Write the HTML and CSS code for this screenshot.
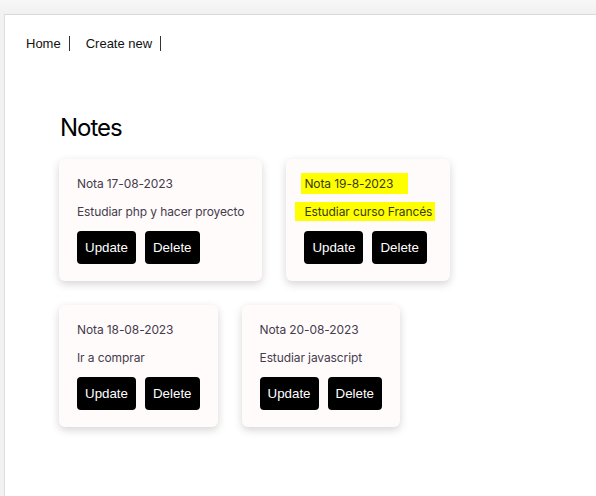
FILE: index.html
```html
<!DOCTYPE html>
<html lang="es">
<head>
<meta charset="utf-8">
<title>Notes</title>
<link rel="stylesheet" href="styles.css">
</head>
<body>
<div class="chrome">
  <div class="window">
    <nav class="nav">
      <a class="nav-link" href="#">Home</a>
      <a class="nav-link" href="#">Create new</a>
    </nav>
    <main class="content">
      <h1 class="title">Notes</h1>
      <div class="notes">
        <div class="card">
          <p class="card-title">Nota 17-08-2023</p>
          <p class="card-text">Estudiar php y hacer proyecto</p>
          <div class="actions"><button class="btn">Update</button><button class="btn">Delete</button></div>
        </div>
        <div class="card">
          <p class="card-title"><span class="hl hl-title">Nota 19-8-2023</span></p>
          <p class="card-text"><span class="hl hl-text">Estudiar curso Francés</span></p>
          <div class="actions"><button class="btn">Update</button><button class="btn">Delete</button></div>
        </div>
        <div class="card">
          <p class="card-title">Nota 18-08-2023</p>
          <p class="card-text">Ir a comprar</p>
          <div class="actions"><button class="btn">Update</button><button class="btn">Delete</button></div>
        </div>
        <div class="card">
          <p class="card-title">Nota 20-08-2023</p>
          <p class="card-text">Estudiar javascript</p>
          <div class="actions"><button class="btn">Update</button><button class="btn">Delete</button></div>
        </div>
      </div>
    </main>
  </div>
</div>
</body>
</html>
```
FILE: styles.css
```css
html, body {
  margin: 0;
  padding: 0;
  height: 100%;
}
body {
  background: #f1f2f1;
  overflow: hidden;
}
.chrome {
  height: 100%;
  padding-top: 14px;
  padding-left: 4px;
  box-sizing: border-box;
  background: linear-gradient(#f6f7f6, #f0f1f0 14px, #f1f2f1 14px);
}
.window {
  height: 100%;
  background: #ffffff;
  border-top: 1px solid #d9dad9;
  border-left: 1px solid #dcdddc;
  box-sizing: border-box;
}
.nav {
  display: flex;
  padding: 21px 0 0 21px;
  font-family: "Liberation Sans", Arial, sans-serif;
  font-size: 13px;
  line-height: 15px;
}
.nav-link {
  color: #111;
  text-decoration: none;
  padding-right: 8px;
  margin-right: 16px;
  border-right: 1px solid #333;
}
.content {
  padding: 0 0 0 54px;
  font-family: Inter, "Noto Sans", sans-serif;
}
.title {
  margin: 62px 0 17px 1px;
  font-size: 24px;
  font-weight: 400;
  line-height: 29px;
  color: #000;
  letter-spacing: -1px;
}
.notes {
  display: flex;
  flex-wrap: wrap;
  align-items: flex-start;
  gap: 24px 24px;
  max-width: 470px;
}
.card {
  background: #fffbfb;
  border-radius: 6px;
  box-shadow: 0 3px 9px rgba(0, 0, 0, 0.17);
  padding: 17px 18px 17px;
}
.card-title, .card-text {
  margin: 0;
  font-size: 12px;
  line-height: 16px;
  letter-spacing: -0.1px;
  color: #463b4c;
  white-space: nowrap;
}
.card-title {
  margin-bottom: 12px;
}
.card-text {
  margin-bottom: 11px;
}
.hl {
  background: #ffff00;
  color: #3a3a10;
}
.hl-title {
  padding: 3px 15px 3px 3px;
  margin: 0 -15px 0 -3px;
}
.hl-text {
  padding: 2px 3px 2px 9px;
  margin: 0 -3px 0 -9px;
}
.actions {
  display: flex;
  gap: 9px;
}
.btn {
  height: 33px;
  padding: 0 8px;
  border: none;
  border-radius: 4px;
  background: #000;
  color: #fff;
  font-family: "Liberation Sans", Arial, sans-serif;
  font-size: 13.33px;
}
```
